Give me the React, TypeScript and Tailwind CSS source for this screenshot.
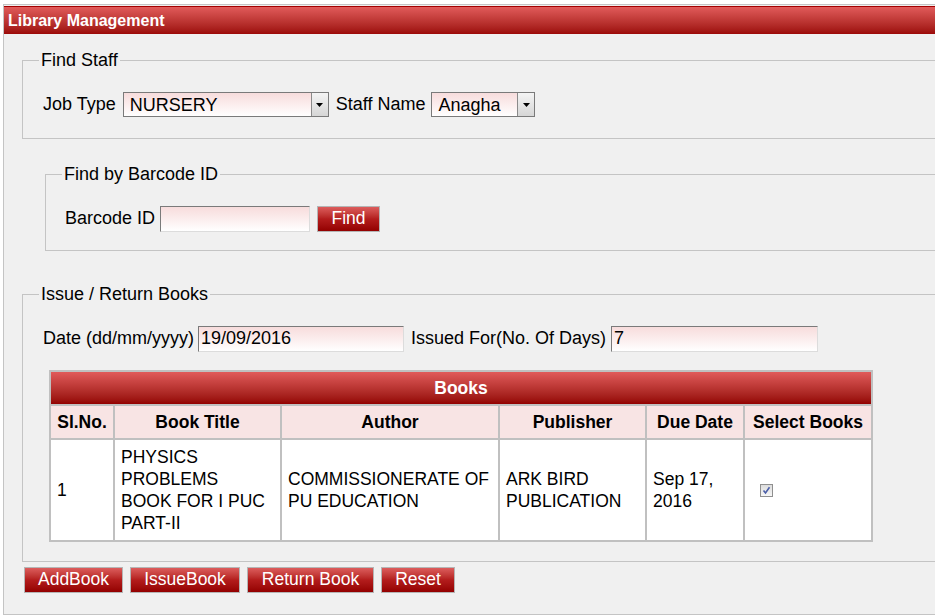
import * as React from "react";

const inputCls =
  "h-[26px] border border-t-[#7a7a7a] border-l-[#7a7a7a] border-r-[#dcdcdc] border-b-[#dcdcdc] bg-linear-to-b from-[#f7dcdc] to-white px-[2px] text-[18px] text-black outline-none";

const btnCls =
  "h-[26px] border border-[#b5b5b5] bg-linear-to-b from-[#dc5c5c] via-[#b31c1c] to-[#930000] text-[17.5px] leading-none text-white";

function FakeSelect({ value, width }: { value: string; width: string }) {
  return (
    <div
      className={`flex h-[25px] items-stretch border border-[#7a7a7a] bg-linear-to-b from-[#f7dcdc] to-white ${width}`}
    >
      <span className="flex flex-1 items-center pl-[6px] leading-none">{value}</span>
      <span className="flex w-[17px] items-center justify-center border-l border-[#8a8a8a] bg-linear-to-b from-[#f4f4f4] to-[#d6d6d6]">
        <svg width="7" height="4" viewBox="0 0 7 4">
          <path d="M0 0h7L3.5 4z" fill="#000" />
        </svg>
      </span>
    </div>
  );
}

function CheckMark() {
  return (
    <span className="inline-flex h-[13px] w-[13px] items-center justify-center border border-[#8f8f8f] bg-linear-to-b from-[#dcdcdc] to-[#f6f6f6]">
      <svg width="9" height="9" viewBox="0 0 9 9">
        <path d="M1.5 4.5l2 2.5L7.5 1.2" fill="none" stroke="#4a5ea8" strokeWidth="1.6" />
      </svg>
    </span>
  );
}

const cell = "border border-[#c0c0c0] py-[6px] pl-[6px] align-middle leading-[22px]";

export default function App() {
  return (
    <div className="h-[615px] w-full overflow-hidden bg-white font-['Liberation_Sans',Arial,sans-serif] text-[18px] text-black">
      <div className="ml-[3px] mt-[4px] h-[611px] w-[1000px] border border-[#c4c4c4] bg-[#f0f0f0] pt-px">
        {/* title bar */}
        <div className="flex h-[28px] items-center border-t border-[#a30000] bg-linear-to-b from-[#e15a5a] to-[#9c0808] pl-[4px] text-[16px] font-bold text-white">
          Library Management
        </div>

        {/* Find Staff */}
        <fieldset className="ml-[18px] mt-[16px] border border-[#c4c4c4] pb-[20px] pl-[20px] pt-[21px]">
          <legend className="-ml-[4px] px-[2px] leading-[20px]">Find Staff</legend>
          <div className="flex items-center">
            <span>Job Type</span>
            <div className="ml-[7px]">
              <FakeSelect value="NURSERY" width="w-[206px]" />
            </div>
            <span className="ml-[7px]">Staff Name</span>
            <div className="ml-[6px]">
              <FakeSelect value="Anagha" width="w-[104px]" />
            </div>
          </div>
        </fieldset>

        {/* Find by Barcode */}
        <fieldset className="ml-[41px] mt-[25px] border border-[#c4c4c4] pb-[18px] pl-[19px] pt-[21px]">
          <legend className="-ml-[3px] px-[2px] leading-[20px]">Find by Barcode ID</legend>
          <div className="flex items-center">
            <span>Barcode ID</span>
            <input className={`ml-[5px] w-[150px] ${inputCls}`} defaultValue="" />
            <button className={`ml-[7px] w-[63px] ${btnCls}`}>Find</button>
          </div>
        </fieldset>

        {/* Issue / Return */}
        <fieldset className="ml-[18px] mt-[33px] border border-[#c4c4c4] pb-[19px] pl-[20px] pt-[21px]">
          <legend className="-ml-[4px] px-[2px] leading-[20px]">Issue / Return Books</legend>
          <div className="flex items-center">
            <span>Date (dd/mm/yyyy)</span>
            <input className={`ml-[4px] w-[206px] ${inputCls}`} defaultValue="19/09/2016" />
            <span className="ml-[7px]">Issued For(No. Of Days)</span>
            <input className={`ml-[5px] w-[207px] ${inputCls}`} defaultValue="7" />
          </div>

          <table className="ml-[6px] mt-[18px] w-[824px] table-fixed border-separate border-spacing-0 border border-[#c0c0c0] text-[17.5px]">
            <colgroup>
              <col className="w-[64px]" />
              <col className="w-[167px]" />
              <col className="w-[218px]" />
              <col className="w-[147px]" />
              <col className="w-[98px]" />
              <col className="w-[128px]" />
            </colgroup>
            <thead>
              <tr>
                <th
                  colSpan={6}
                  className="border border-[#c0c0c0] bg-linear-to-b from-[#e15a5a] to-[#930000] py-[5px] text-center leading-[22px] font-bold text-white"
                >
                  Books
                </th>
              </tr>
              <tr className="bg-[#f8e4e4]">
                {["Sl.No.", "Book Title", "Author", "Publisher", "Due Date", "Select Books"].map((h) => (
                  <th
                    key={h}
                    className="whitespace-nowrap border border-[#c0c0c0] px-[2px] py-[5px] text-center leading-[22px] font-bold"
                  >
                    {h}
                  </th>
                ))}
              </tr>
            </thead>
            <tbody>
              <tr className="bg-white">
                <td className={`${cell} pr-[8px]`}>1</td>
                <td className={`${cell} pr-[8px]`}>PHYSICS PROBLEMS BOOK FOR I PUC PART-II</td>
                <td className={`${cell} pr-[4px]`}>COMMISSIONERATE OF PU EDUCATION</td>
                <td className={`${cell} pr-[8px]`}>ARK BIRD PUBLICATION</td>
                <td className={`${cell} pr-[8px]`}>Sep 17, 2016</td>
                <td className={`${cell} pl-[15px]`}>
                  <span className="flex">
                    <CheckMark />
                  </span>
                </td>
              </tr>
            </tbody>
          </table>
        </fieldset>

        {/* actions */}
        <div className="ml-[20px] mt-[5px] flex gap-[7px]">
          <button className={`w-[99px] ${btnCls}`}>AddBook</button>
          <button className={`w-[110px] ${btnCls}`}>IssueBook</button>
          <button className={`w-[127px] ${btnCls}`}>Return Book</button>
          <button className={`w-[74px] ${btnCls}`}>Reset</button>
        </div>
      </div>
    </div>
  );
}
